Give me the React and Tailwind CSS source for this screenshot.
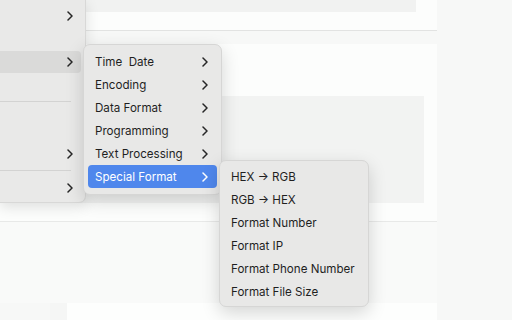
import React from 'react';

const FONT = { fontFamily: 'Inter, "Liberation Sans", "Noto Sans", sans-serif' };

const SUB_MENU = ['Time  Date', 'Encoding', 'Data Format', 'Programming', 'Text Processing', 'Special Format'];
const FORMAT_MENU = ['HEX → RGB', 'RGB → HEX', 'Format Number', 'Format IP', 'Format Phone Number', 'Format File Size'];

function Chevron({ white }) {
  return (
    <svg width="6" height="10" viewBox="0 0 6 10" className="shrink-0">
      <polyline
        points="1,1 5,5 1,9"
        fill="none"
        stroke={white ? '#ffffff' : '#262626'}
        strokeWidth="1.5"
        strokeLinecap="round"
        strokeLinejoin="round"
      />
    </svg>
  );
}

function Separator() {
  return (
    <div className="h-[11px] flex items-center pr-[14px]">
      <div className="h-px w-full bg-[#d3d3d2]" />
    </div>
  );
}

function LeftMenu() {
  return (
    <div className="absolute left-0 top-0 w-[86px] h-[203px] bg-[#e9e9e8] rounded-br-[7px] border-r border-b border-[#d8d8d7] shadow-[0_4px_14px_rgba(0,0,0,0.12)] pt-[4px] flex flex-col">
      <div className="h-[23px] flex items-center justify-end pr-[12px]"><Chevron /></div>
      <div className="h-[23px]" />
      <div className="h-[23px] flex items-center justify-end pr-[4px]">
        <div className="h-[22px] w-full bg-[#dadad9] rounded-r-[4px] flex items-center justify-end pr-[8px]">
          <Chevron />
        </div>
      </div>
      <div className="h-[23px]" />
      <Separator />
      <div className="h-[35px]" />
      <div className="h-[23px] flex items-center justify-end pr-[12px]"><Chevron /></div>
      <Separator />
      <div className="h-[23px] flex items-center justify-end pr-[12px]"><Chevron /></div>
    </div>
  );
}

function SubMenu() {
  return (
    <div className="absolute left-[83px] top-[44px] w-[139px] bg-[#e8e8e7] rounded-[7px] border border-[#d6d6d5] shadow-[0_6px_18px_rgba(0,0,0,0.16)] px-[4px] pt-[5px] pb-[6px] flex flex-col">
      {SUB_MENU.map((label, i) => {
        const active = i === SUB_MENU.length - 1;
        return (
          <div
            key={label}
            className={`h-[23px] flex items-center justify-between pl-[7px] pr-[9px] rounded-[4px] ${active ? 'bg-[#4f87ec] text-white' : 'text-[#1f1f1f]'}`}
          >
            <span className="text-[11.6px] whitespace-pre leading-none pt-[2px]">{label}</span>
            <Chevron white={active} />
          </div>
        );
      })}
    </div>
  );
}

function FormatMenu() {
  return (
    <div className="absolute left-[219px] top-[160px] w-[150px] h-[147px] bg-[#e8e8e7] rounded-[7px] border border-[#d6d6d5] shadow-[0_6px_18px_rgba(0,0,0,0.16)] px-[4px] pt-[4px] flex flex-col">
      {FORMAT_MENU.map((label) => (
        <div key={label} className="h-[23px] flex items-center pl-[7px] text-[#1f1f1f]">
          <span className="text-[11.6px] leading-none pt-[2px]">{label}</span>
        </div>
      ))}
    </div>
  );
}

export default function App() {
  return (
    <div className="relative w-[512px] h-[320px] overflow-hidden bg-[#f7f8f7]" style={FONT}>
      {/* page behind the menus */}
      <div className="flex h-full">
        <div className="w-[437px] h-full bg-[#fcfdfc] flex flex-col">
          <div className="h-[12px] w-[416px] bg-[#f1f2f1]" />
          <div className="h-[19px] border-b border-[#e2e3e2]" />
          <div className="h-[13px] bg-[#f7f8f7]" />
          <div className="h-[178px] flex flex-col border-b border-[#e8e9e8]">
            <div className="h-[52px]" />
            <div className="h-[107px] w-[424px] bg-[#f2f3f2]" />
          </div>
          <div className="flex-1 bg-[#f9faf9] flex flex-col justify-end">
            <div className="h-[17px] flex">
              <div className="w-[50px] bg-[#f7f8f7]" />
              <div className="w-[17px] bg-[#f5f6f5]" />
              <div className="flex-1 bg-[#fdfefd]" />
            </div>
          </div>
        </div>
        <div className="flex-1 bg-[#f7f8f7]" />
      </div>

      <LeftMenu />
      <SubMenu />
      <FormatMenu />
    </div>
  );
}
